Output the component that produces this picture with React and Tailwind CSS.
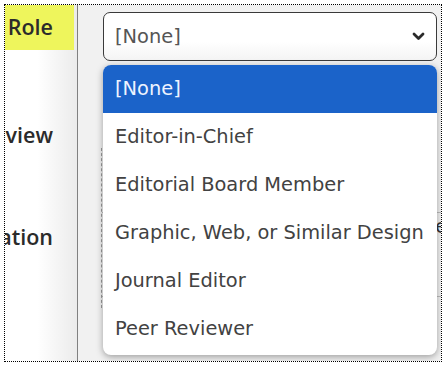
import React from "react";

const options = [
  "[None]",
  "Editor-in-Chief",
  "Editorial Board Member",
  "Graphic, Web, or Similar Design",
  "Journal Editor",
  "Peer Reviewer",
];

const App = () => {
  return (
    <div className="w-[446px] h-[366px] bg-white p-[4px] font-['DejaVu_Sans',sans-serif]">
      <div className="flex h-full border border-dotted border-black overflow-hidden">
        {/* labels column */}
        <div className="w-[73px] shrink-0 border-r-[1.5px] border-[#808080] bg-[linear-gradient(to_right,#ffffff_45%,#ebebeb)] flex flex-col font-['Open_Sans',sans-serif] font-semibold text-[21.5px] text-[#2b2b2b]">
          <div className="h-[45px] w-[69px] bg-[#eef55c] flex items-center justify-end pr-[21px] overflow-hidden whitespace-nowrap">
            Role
          </div>
          <div className="mt-[63px] h-[45px] w-[69px] flex items-center justify-end pr-[21px] overflow-hidden whitespace-nowrap">
            Review
          </div>
          <div className="mt-[57px] h-[45px] w-[69px] flex items-center justify-end pr-[21px] overflow-hidden whitespace-nowrap">
            Affiliation
          </div>
        </div>

        {/* form column */}
        <div className="relative flex-1 bg-[#f1f1f1] pl-[25px] pt-[7px]">
          <div className="w-[334px] h-[49px] rounded-[7px] border border-[#3a3a3a] bg-[linear-gradient(to_bottom,#ffffff_60%,#f4f4f4)] flex items-center justify-between pl-[11px] pr-[11px] text-[19.4px] text-[#555]">
            <span>[None]</span>
            <svg width="13" height="9" viewBox="0 0 13 9">
              <polyline
                points="2,2 6.5,6.5 11,2"
                fill="none"
                stroke="#2a2a2a"
                strokeWidth="2.8"
                strokeLinecap="round"
                strokeLinejoin="round"
              />
            </svg>
          </div>

          {/* fields behind the open list */}
          <div className="mt-[87px] ml-[-2px] h-[160px] border-l border-dashed border-[#9a9a9a] flex flex-col">
            <div className="mt-[64px] h-[1px] bg-[#bdbdbd]" />
            <div className="mt-[4px] self-end text-[19px] leading-none text-[#333] mr-[-6px]">e</div>
            <div className="mt-[60px] h-[1px] bg-[#bdbdbd]" />
          </div>

          {/* open list */}
          <div className="absolute left-[25px] top-[60px] w-[334px] bg-white rounded-[8px] overflow-hidden pb-[2px] shadow-[0_2px_7px_rgba(0,0,0,0.35)]">
            {options.map((opt, i) => (
              <div
                key={opt}
                className={
                  i === 0
                    ? "h-[48px] flex items-center pl-[12px] text-[19.4px] whitespace-nowrap bg-[#1b63c9] text-[#eef3ff]"
                    : "h-[48px] flex items-center pl-[12px] text-[19.4px] whitespace-nowrap text-[#424242]"
                }
              >
                {opt}
              </div>
            ))}
          </div>
        </div>
      </div>
    </div>
  );
};

export default App;
